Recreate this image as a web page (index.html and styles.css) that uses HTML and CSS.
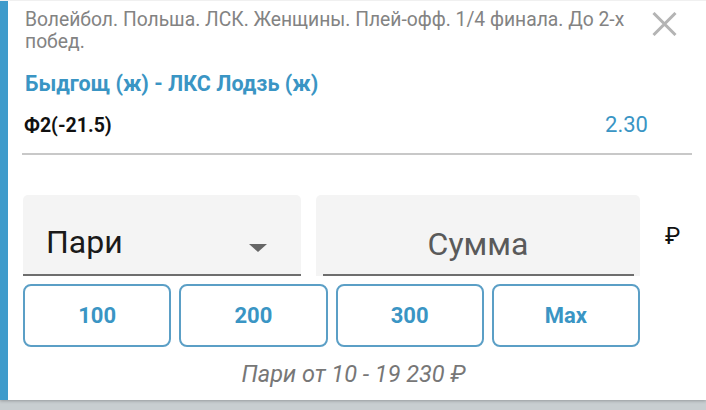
FILE: index.html
```html
<!DOCTYPE html>
<html lang="ru">
<head>
<meta charset="utf-8">
<link rel="stylesheet" href="styles.css">
</head>
<body>
<div class="card">
  <div class="accent"></div>
  <div class="content">
    <div class="header">
      <div class="title">Волейбол. Польша. ЛСК. Женщины. Плей-офф. 1/4 финала. До 2-х побед.</div>
      <button class="close" aria-label="Закрыть">
        <svg width="25" height="24" viewBox="0 0 25 24"><path d="M1.5 1 L23.5 23 M23.5 1 L1.5 23" stroke="#b4b4b4" stroke-width="3" fill="none"/></svg>
      </button>
    </div>
    <div class="teams">Быдгощ (ж) - ЛКС Лодзь (ж)</div>
    <div class="market">
      <span class="market-name">Ф2(-21.5)</span>
      <span class="odds">2.30</span>
    </div>
    <div class="form">
      <div class="field select">
        <span class="select-value">Пари</span>
        <span class="arrow"></span>
      </div>
      <div class="field amount">
        <span class="placeholder">Сумма</span>
      </div>
      <span class="currency">₽</span>
    </div>
    <div class="quick">
      <button class="qbtn">100</button>
      <button class="qbtn">200</button>
      <button class="qbtn">300</button>
      <button class="qbtn">Max</button>
    </div>
    <div class="limits">Пари от 10 - 19 230 ₽</div>
  </div>
</div>
</body>
</html>
```

FILE: styles.css
```css
* { box-sizing: border-box; }
html, body { margin: 0; padding: 0; }
body {
  width: 706px;
  height: 410px;
  background: #c8ced1;
  font-family: Roboto, "Noto Sans", sans-serif;
  overflow: hidden;
}
.card {
  display: flex;
  height: 400px;
  background: #fff;
  box-shadow: 0 1px 3px rgba(0,0,0,0.25);
  border-top: 1px solid #f0f0f0;
}
.accent {
  width: 8px;
  flex: none;
  background: #3f9bcb;
}
.content {
  flex: 1;
  padding: 0 14px 0 15px;
  display: flex;
  flex-direction: column;
}
.header {
  display: flex;
  align-items: flex-start;
  justify-content: space-between;
  padding-top: 8px;
}
.title {
  width: 612px;
  font-size: 19.3px;
  line-height: 22px;
  color: #838383;
  padding-left: 2px;
}
.close {
  border: 0;
  background: none;
  padding: 0;
  margin: 3px 15px 0 0;
  width: 25px;
  height: 24px;
  display: block;
}
.close svg { display: block; }
.teams {
  margin-top: 18px;
  padding-left: 2px;
  font-size: 21.5px;
  font-weight: 700;
  line-height: 26px;
  color: #3a95c4;
}
.market {
  display: flex;
  justify-content: space-between;
  align-items: baseline;
  margin-top: 15px;
  margin-left: -1px;
  padding: 0 44px 14px 2px;
  border-bottom: 2px solid #c8c8c8;
  line-height: 26px;
}
.market-name {
  font-size: 19.5px;
  font-weight: 700;
  color: #111;
}
.odds {
  font-size: 22px;
  color: #3a95c4;
}
.form {
  display: flex;
  align-items: flex-start;
  margin-top: 40px;
}
.field {
  height: 81px;
  background: #f4f4f4;
  border-radius: 5px 5px 0 0;
  position: relative;
  display: flex;
  align-items: center;
}
.select {
  width: 278px;
  border-bottom: 2px solid #6e6e6e;
  padding: 14px 0 0 23px;
}
.select-value {
  font-size: 32px;
  color: #1a1a1a;
}
.arrow {
  margin-left: auto;
  margin-right: 34px;
  width: 0;
  height: 0;
  border-left: 9px solid transparent;
  border-right: 9px solid transparent;
  border-top: 8px solid #666;
  margin-top: 12px;
}
.amount {
  width: 324px;
  margin-left: 15px;
  justify-content: center;
  padding-top: 16px;
}
.amount::after {
  content: "";
  position: absolute;
  left: 7px;
  right: 6px;
  bottom: 0;
  height: 2px;
  background: #6e6e6e;
}
.placeholder {
  font-size: 32px;
  color: #5a5a5a;
}
.currency {
  margin: 28px 0 0 25px;
  font-size: 23px;
  color: #111;
}
.quick {
  display: grid;
  grid-template-columns: repeat(4, 1fr);
  gap: 8px;
  width: 617px;
  margin-top: 8px;
}
.qbtn {
  height: 63px;
  border: 2px solid #5b9fc6;
  border-radius: 8px;
  background: #fff;
  font-family: Roboto, "Noto Sans", sans-serif;
  font-size: 22px;
  font-weight: 700;
  color: #3a95c4;
  padding: 0;
}
.limits {
  margin: 13px -14px 0 -15px;
  padding-right: 7px;
  text-align: center;
  font-size: 23.5px;
  line-height: 28px;
  font-style: italic;
  color: #777;
}
```
